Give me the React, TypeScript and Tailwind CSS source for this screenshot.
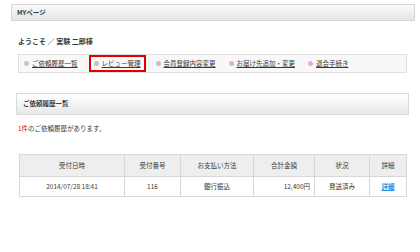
const links = [
  { label: "ご依頼履歴一覧", active: false },
  { label: "レビュー管理", active: true },
  { label: "会員登録内容変更", active: false },
  { label: "お届け先追加・変更", active: false },
  { label: "退会手続き", active: false },
];

export default function App() {
  return (
    <div className="w-[420px] h-[252px] bg-white text-[#3a3a3a] overflow-hidden font-['Noto_Sans_CJK_JP',sans-serif] text-[6.5px]">
      {/* page title */}
      <div className="mt-[4px] ml-[11px] w-[404px] h-[17px] border border-[#d6d6d6] bg-gradient-to-b from-[#fbfbfb] to-[#e4e4e4] flex items-center pl-[5px] font-bold">
        MYページ
      </div>

      <div className="mt-[15px] ml-[18px] font-bold text-[7px] leading-[10px]">ようこそ ／ 実験 二郎様</div>

      {/* nav */}
      <div className="mt-[8px] ml-[18px] w-[389px] h-[19px] border border-[#e0e0e0] bg-[#f8f8f8] flex items-center pl-[3px]">
        {links.map((l) => (
          <div
            key={l.label}
            className={`flex items-center gap-[3px] ${l.active ? "border-2 border-[#e00000] h-[17px] px-[3px] mr-[8px]" : "px-[2px] mr-[9px]"}`}
          >
            <span className="w-[5px] h-[5px] rounded-full bg-[#dcb4d2]" />
            <span className="underline">{l.label}</span>
          </div>
        ))}
      </div>

      {/* section */}
      <div className="mt-[20px] ml-[16px] w-[393px] h-[22px] border border-[#dadada] bg-gradient-to-b from-[#ffffff] to-[#e8e8e8] flex items-center pl-[6px] font-bold">
        ご依頼履歴一覧
      </div>

      <div className="mt-[8px] ml-[18px] leading-[10px]">
        <span className="text-[#e60000]">1件</span>のご依頼履歴があります。
      </div>

      <table className="mt-[21px] ml-[19px] w-[388px] border-collapse text-center">
        <thead>
          <tr className="bg-[#eeeeee] h-[22px]">
            <th className="font-normal border border-[#d8d8d8] w-[105px]">受付日時</th>
            <th className="font-normal border border-[#d8d8d8] w-[56px]">受付番号</th>
            <th className="font-normal border border-[#d8d8d8] w-[73px]">お支払い方法</th>
            <th className="font-normal border border-[#d8d8d8] w-[61px]">合計金額</th>
            <th className="font-normal border border-[#d8d8d8] w-[55px]">状況</th>
            <th className="font-normal border border-[#d8d8d8]">詳細</th>
          </tr>
        </thead>
        <tbody>
          <tr className="h-[20px]">
            <td className="border border-[#d8d8d8]">2014/07/28 18:41</td>
            <td className="border border-[#d8d8d8]">116</td>
            <td className="border border-[#d8d8d8]">銀行振込</td>
            <td className="border border-[#d8d8d8] text-right pr-[4px]">12,400円</td>
            <td className="border border-[#d8d8d8]">発送済み</td>
            <td className="border border-[#d8d8d8] font-bold text-[#1e8fe0] underline">詳細</td>
          </tr>
        </tbody>
      </table>
    </div>
  );
}
